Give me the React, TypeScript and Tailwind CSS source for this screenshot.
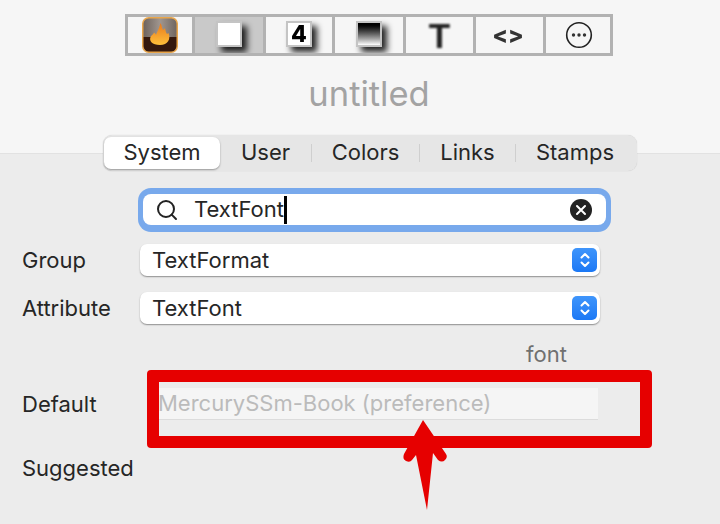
import React from "react";
import { Search } from "lucide-react";

const font = "font-['Inter','Liberation_Sans',sans-serif]";

function ToolCell({ width, selected, children }: { width: string; selected?: boolean; children: React.ReactNode }) {
  return (
    <div className={`${width} ${selected ? "bg-[#c9c9c9]" : "bg-[#f6f6f6]"} relative flex items-center justify-center border-r-[3px] border-[#b2b2b2] overflow-hidden`}>
      {children}
    </div>
  );
}

function FlameIcon() {
  return (
    <svg width="36" height="36" viewBox="0 0 36 36">
      <defs>
        <linearGradient id="sky" x1="0" y1="0" x2="1" y2="0">
          <stop offset="0" stopColor="#6d625c" />
          <stop offset="0.5" stopColor="#a0968f" />
          <stop offset="1" stopColor="#6f655f" />
        </linearGradient>
        <linearGradient id="flame" x1="0" y1="0" x2="0" y2="1">
          <stop offset="0" stopColor="#e8791c" />
          <stop offset="1" stopColor="#ffc03a" />
        </linearGradient>
      </defs>
      <rect x="0.75" y="0.75" width="34.5" height="34.5" rx="6" fill="url(#sky)" />
      <path d="M1 20H35V29a6 6 0 0 1-6 6H7a6 6 0 0 1-6-6Z" fill="#35190e" />
      <rect x="0.75" y="0.75" width="34.5" height="34.5" rx="6" fill="none" stroke="#e9a64b" strokeWidth="1.5" />
      <path d="M18 28C10 28 7 24 8.500 20C9.500 18 11.500 17.500 12 15.500C13.500 16.500 14 17.500 14 18C15 15 17 12 18.500 6C20 9 20 11 21 13C22 12 22.500 12 23 11C23.500 14 24 16 25 17C25.500 16.800 26 16.500 26.500 16C29 22 26 28 18 28Z" fill="url(#flame)" />
    </svg>
  );
}

function PageIcon({ children, gradient }: { children?: React.ReactNode; gradient?: boolean }) {
  return (
    <div className="relative w-[26px] h-[26px] -translate-y-[1px]">
      <div className="absolute left-[5px] top-[5px] w-[26px] h-[26px] bg-black/85 blur-[3px]" />
      <div className={`absolute inset-0 flex items-center justify-center border-2 border-[#c4c4c4] ${gradient ? "bg-gradient-to-b from-[#000] to-[#fff]" : "bg-white"}`}>
        {children}
      </div>
    </div>
  );
}

function Stepper() {
  return (
    <div className="w-[25px] h-[24px] rounded-[5px] bg-gradient-to-b from-[#3f95fb] to-[#1b78f5] flex items-center justify-center">
      <svg width="12" height="16" viewBox="0 0 12 16" fill="none" stroke="#fff" strokeWidth="2" strokeLinecap="round" strokeLinejoin="round">
        <path d="M2.500 5.500L6 2L9.500 5.500" />
        <path d="M2.500 10.500L6 14L9.500 10.500" />
      </svg>
    </div>
  );
}

function SelectRow({ label, value, className }: { label: string; value: string; className?: string }) {
  return (
    <div className={`flex items-center h-[32px] ${className ?? ""}`}>
      <div className="w-[140px] pl-[22px] text-[22px] text-[#262626]">{label}</div>
      <div className="w-[460px] h-[32px] rounded-[7px] bg-white shadow-[0_1px_1.500px_rgba(0,0,0,0.4)] flex items-center justify-between pl-[12px] pr-[3px]">
        <span className="text-[22px] text-[#262626]">{value}</span>
        <Stepper />
      </div>
    </div>
  );
}

export default function App(): React.ReactElement {
  return (
    <div className={`${font} relative w-[720px] h-[524px] overflow-hidden bg-[#f6f6f6] flex flex-col`}>
      {/* Toolbar */}
      <div className="mt-[14px] ml-[125px] flex h-[42px] w-[488px] border-y-[3px] border-l-[3px] border-[#b2b2b2]">
        <ToolCell width="w-[67px]"><FlameIcon /></ToolCell>
        <ToolCell width="w-[71px]" selected><PageIcon /></ToolCell>
        <ToolCell width="w-[69px]">
          <PageIcon><span className="text-[23px] leading-none font-extrabold text-black blur-[0.5px]">4</span></PageIcon>
        </ToolCell>
        <ToolCell width="w-[71px]"><PageIcon gradient /></ToolCell>
        <ToolCell width="w-[70px]">
          <span className="font-['Liberation_Sans',sans-serif] text-[35px] leading-none font-bold text-[#222] blur-[0.8px]">T</span>
        </ToolCell>
        <ToolCell width="w-[70px]">
          <span className="pr-[3px] text-[23px] leading-none font-extrabold text-[#333] blur-[0.5px]">&lt;&gt;</span>
        </ToolCell>
        <div className="flex-1 flex items-center justify-center pl-[2px] border-r-[3px] border-[#b2b2b2]">
          <svg width="28" height="28" viewBox="0 0 28 28">
            <circle cx="14" cy="14" r="12.300" fill="none" stroke="#222" strokeWidth="1.600" />
            <circle cx="8.500" cy="14" r="1.700" fill="#333" />
            <circle cx="14" cy="14" r="1.700" fill="#333" />
            <circle cx="19.500" cy="14" r="1.700" fill="#333" />
          </svg>
        </div>
      </div>

      <div className="mt-[16px] ml-[18px] h-[44px] text-center text-[34.500px] leading-[44px] text-[#a3a3a3]">untitled</div>

      {/* Panel */}
      <div className="mt-[37px] flex-1 bg-[#ececec] border-t border-[#e2e2e2] relative">
        <div className="-mt-[19px] ml-[103px] w-[534px] h-[36px] pb-[1px] rounded-[9px] bg-[#e6e6e6] shadow-[0_0_1px_rgba(0,0,0,0.2)] flex items-center text-[22px] text-[#262626]">
          <div className="ml-[1px] w-[116px] h-[32px] rounded-[7px] bg-white shadow-[0_1px_2px_rgba(0,0,0,0.35)] flex items-center justify-center">System</div>
          <div className="w-[91px] text-center">User</div>
          <div className="w-[1px] h-[18px] bg-[#cfcfcf]" />
          <div className="w-[107px] text-center">Colors</div>
          <div className="w-[1px] h-[18px] bg-[#cfcfcf]" />
          <div className="w-[95px] text-center">Links</div>
          <div className="w-[1px] h-[18px] bg-[#cfcfcf]" />
          <div className="flex-1 pr-[3px] text-center">Stamps</div>
        </div>

        <div className="mt-[17px] ml-[138px] w-[473px] h-[44px] rounded-[13px] bg-[#78a9ec] p-[6px_5px_7px_5px] flex">
          <div className="flex-1 rounded-[8px] bg-white flex items-center pl-[12px] pr-[14px]">
            <Search size={24} strokeWidth={2} className="text-[#222]" />
            <span className="ml-[15px] text-[22px] text-[#262626]">TextFont</span>
            <span className="w-[3px] h-[28px] bg-black" />
            <span className="ml-auto w-[22px] h-[22px] rounded-full bg-[#222] flex items-center justify-center">
              <svg width="12" height="12" viewBox="0 0 12 12" stroke="#fff" strokeWidth="2" strokeLinecap="round">
                <path d="M2 2L10 10M10 2L2 10" />
              </svg>
            </span>
          </div>
        </div>

        <SelectRow label="Group" value="TextFormat" className="mt-[12px]" />
        <SelectRow label="Attribute" value="TextFont" className="mt-[16px]" />

        <div className="mt-[18px] ml-[526px] h-[24px] leading-[24px] text-[22px] text-[#707070]">font</div>

        <div className="mt-[22px] flex items-center h-[32px]">
          <div className="w-[159px] pl-[22px] text-[22px] text-[#262626]">Default</div>
          <div className="w-[439px] h-[32px] bg-[#f5f5f5] border-b border-[#dcdcdc] flex items-center -indent-[1px] text-[22px] text-[#bbbbbb]">
            MercurySSm-Book (preference)
          </div>
        </div>

        <div className="mt-[32px] pl-[22px] h-[32px] leading-[32px] text-[22px] text-[#262626]">Suggested</div>
      </div>

      {/* Red annotation */}
      <div className="absolute left-[147px] top-[370px] w-[505px] h-[78px] border-[12px] border-[#e60000] rounded-[4px]" />
      <svg className="absolute left-[395px] top-[415px]" width="60" height="100" viewBox="0 0 60 100">
        <path d="M28 5L9 39Q7 44 11 46Q15 48 17 45L21 40L32 95L38 38L43 45Q47 48 50 45Q53 42 51 39Z" fill="#e60000" />
      </svg>
    </div>
  );
}
